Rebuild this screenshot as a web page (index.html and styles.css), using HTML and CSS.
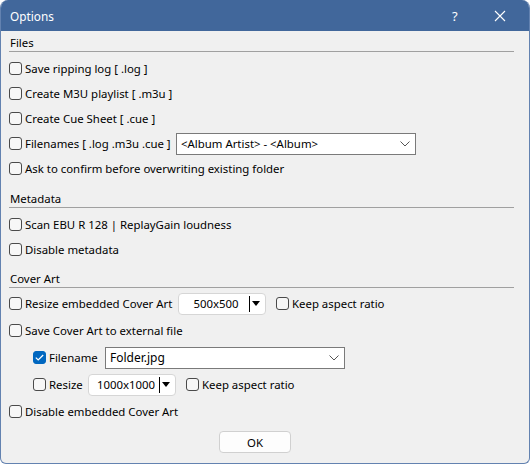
FILE: index.html
```html
<!DOCTYPE html>
<html lang="en">
<head>
    <meta charset="UTF-8">
    <title>Options</title>
    <link rel="stylesheet" href="styles.css">
</head>
<body>
    <div class="window">
        <div class="titlebar">
            <span class="title">Options</span>
            <span class="help">?</span>
            <span class="close">
                <svg width="12" height="12" viewBox="0 0 12 12"><path d="M1 1 L11 11 M11 1 L1 11" stroke="#fff" stroke-width="1.1" fill="none"/></svg>
            </span>
        </div>

        <div class="section files">
            <div class="section-head">Files</div>
            <div class="row"><span class="check"></span><span class="label">Save ripping log [ .log ]</span></div>
            <div class="row"><span class="check"></span><span class="label">Create M3U playlist [ .m3u ]</span></div>
            <div class="row"><span class="check"></span><span class="label">Create Cue Sheet [ .cue ]</span></div>
            <div class="row">
                <span class="check"></span><span class="label w-filenames">Filenames [ .log .m3u .cue ]</span>
                <div class="combo combo-pattern">
                    <span>&lt;Album Artist&gt; - &lt;Album&gt;</span>
                    <svg class="chevron" width="10" height="6" viewBox="0 0 10 6"><path d="M0.5 0.5 L5 5 L9.5 0.5" stroke="#555" fill="none"/></svg>
                </div>
            </div>
            <div class="row"><span class="check"></span><span class="label">Ask to confirm before overwriting existing folder</span></div>
        </div>

        <div class="section metadata">
            <div class="section-head">Metadata</div>
            <div class="row"><span class="check"></span><span class="label">Scan EBU R 128 | ReplayGain loudness</span></div>
            <div class="row"><span class="check"></span><span class="label">Disable metadata</span></div>
        </div>

        <div class="section cover">
            <div class="section-head">Cover Art</div>
            <div class="row">
                <span class="check"></span><span class="label w-resize-embedded">Resize embedded Cover Art</span>
                <div class="spin spin-small">
                    <span class="spin-value">500x500</span>
                    <span class="spin-arrow"><i class="bar"></i><i class="tri"></i></span>
                </div>
                <span class="check"></span><span class="label">Keep aspect ratio</span>
            </div>
            <div class="row"><span class="check"></span><span class="label">Save Cover Art to external file</span></div>
            <div class="row sub">
                <span class="check checked">
                    <svg width="9" height="7" viewBox="0 0 9 7"><path d="M0.8 3.6 L3.2 6 L8.2 1" stroke="#fff" stroke-width="1.2" fill="none"/></svg>
                </span><span class="label w-filename">Filename</span>
                <div class="combo combo-file">
                    <span>Folder.jpg</span>
                    <svg class="chevron" width="10" height="6" viewBox="0 0 10 6"><path d="M0.5 0.5 L5 5 L9.5 0.5" stroke="#555" fill="none"/></svg>
                </div>
            </div>
            <div class="row sub">
                <span class="check"></span><span class="label w-resize">Resize</span>
                <div class="spin spin-small">
                    <span class="spin-value">1000x1000</span>
                    <span class="spin-arrow"><i class="bar"></i><i class="tri"></i></span>
                </div>
                <span class="check"></span><span class="label">Keep aspect ratio</span>
            </div>
            <div class="row"><span class="check"></span><span class="label">Disable embedded Cover Art</span></div>
        </div>

        <div class="buttons">
            <button class="btn">OK</button>
        </div>
    </div>
</body>
</html>
```

FILE: styles.css
```css
body {
    margin: 0;
    font-family: "Noto Sans", "Open Sans", sans-serif;
    font-size: 11.4px;
    color: #000;
    background: #fff;
}
.window {
    width: 530px;
    height: 464px;
    box-sizing: border-box;
    background: #f0f0f0;
    border: 1px solid #6382b0;
    border-top: none;
    border-radius: 8px 8px 6px 6px;
    overflow: hidden;
}
.titlebar {
    height: 31px;
    background: #41679b;
    color: #fff;
    display: flex;
    align-items: center;
    padding-left: 9px;
    font-size: 11.8px;
}
.title {
    flex: 1;
}
.help {
    width: 12px;
    margin-right: 30px;
    font-size: 13px;
}
.close {
    display: flex;
    margin-right: 23px;
}
.section {
    padding-left: 8px;
}
.section-head {
    margin-right: 15px;
    padding: 4px 0 0 1px;
    height: 16px;
    line-height: 16px;
    border-bottom: 1px solid #a0a0a0;
    margin-bottom: 4px;
}
.metadata {
    margin-top: 6px;
}
.cover {
    margin-top: 5px;
}
.row {
    height: 25px;
    display: flex;
    align-items: center;
}
.cover .row {
    height: 27px;
}
.cover .section-head {
    margin-bottom: 2px;
}
.row.sub {
    padding-left: 24px;
}
.check {
    width: 13px;
    height: 13px;
    box-sizing: border-box;
    border: 1px solid #4a4a4a;
    border-radius: 3px;
    background: #f7f7f7;
    flex-shrink: 0;
    margin-right: 3px;
    display: flex;
    align-items: center;
    justify-content: center;
}
.check.checked {
    background: #0067c0;
    border-color: #0067c0;
}
.label {
    white-space: nowrap;
}
.w-filenames { width: 151px; }
.w-resize-embedded { width: 153px; }
.w-filename { width: 56px; }
.w-resize { width: 39px; }
.combo {
    height: 22px;
    box-sizing: border-box;
    background: #fff;
    border: 1px solid #7a7a7a;
    display: flex;
    align-items: center;
    padding: 0 4px;
    justify-content: space-between;
}
.combo-pattern {
    width: 240px;
}
.combo-file {
    width: 240px;
    font-size: 12px;
}
.chevron {
    margin-right: 1px;
}
.spin {
    height: 22px;
    width: 88px;
    box-sizing: border-box;
    background: #fff;
    border: 1px solid #d6d6d6;
    border-radius: 4px;
    display: flex;
    align-items: center;
    margin-right: 10px;
}
.spin-value {
    flex: 1;
    text-align: center;
    padding-left: 4px;
}
.spin-arrow {
    width: 16px;
    display: flex;
    align-items: center;
    height: 100%;
}
.spin-arrow .bar {
    width: 1px;
    height: 16px;
    background: #000;
    margin-right: 2px;
}
.spin-arrow .tri {
    width: 0;
    height: 0;
    border-left: 4px solid transparent;
    border-right: 4px solid transparent;
    border-top: 5px solid #000;
}
.buttons {
    padding: 6px 0 0 218px;
}
.btn {
    width: 72px;
    height: 22px;
    font-family: inherit;
    font-size: 11.4px;
    background: #fdfdfd;
    border: 1px solid #d0d0d0;
    border-radius: 4px;
    color: #000;
    padding: 0;
}
```
